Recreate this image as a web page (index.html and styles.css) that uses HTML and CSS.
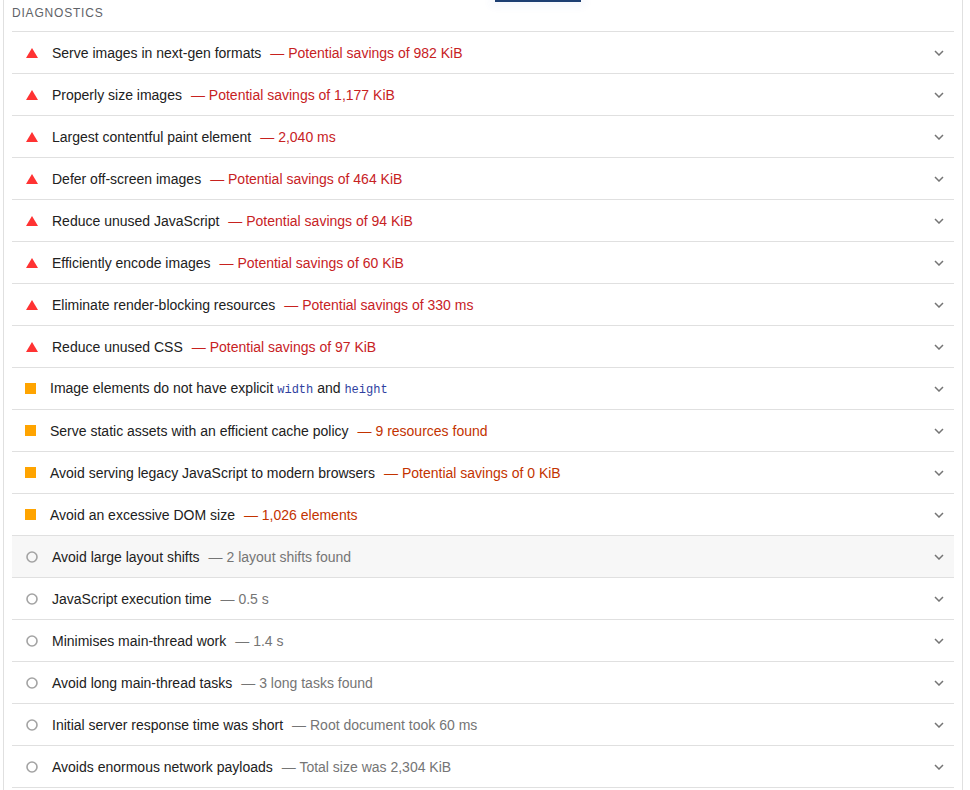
FILE: index.html
```html
<!DOCTYPE html>
<html lang="en">
<head>
    <meta charset="UTF-8">
    <meta name="viewport" content="width=device-width, initial-scale=1.0">
    <title>Diagnostics</title>
    <link rel="stylesheet" href="styles.css">
</head>
<body>
    <div class="audit-group">
        <div class="tab-marker"></div>
        <div class="group-header">Diagnostics</div>
        <div class="audit-list">
            <div class="audit fail">
                <span class="audit-icon"><svg width="12" height="10" viewBox="0 0 12 10"><path d="M6 0L12 10H0Z" fill="#f33"/></svg></span>
                <span class="audit-title">Serve images in next-gen formats</span>
                <span class="audit-value">— Potential savings of 982 KiB</span>
                <span class="chevron"><svg width="10" height="6" viewBox="0 0 10 6"><path d="M1 1l4 4 4-4" fill="none" stroke="#757575" stroke-width="1.5"/></svg></span>
            </div>
            <div class="audit fail">
                <span class="audit-icon"><svg width="12" height="10" viewBox="0 0 12 10"><path d="M6 0L12 10H0Z" fill="#f33"/></svg></span>
                <span class="audit-title">Properly size images</span>
                <span class="audit-value">— Potential savings of 1,177 KiB</span>
                <span class="chevron"><svg width="10" height="6" viewBox="0 0 10 6"><path d="M1 1l4 4 4-4" fill="none" stroke="#757575" stroke-width="1.5"/></svg></span>
            </div>
            <div class="audit fail">
                <span class="audit-icon"><svg width="12" height="10" viewBox="0 0 12 10"><path d="M6 0L12 10H0Z" fill="#f33"/></svg></span>
                <span class="audit-title">Largest contentful paint element</span>
                <span class="audit-value">— 2,040 ms</span>
                <span class="chevron"><svg width="10" height="6" viewBox="0 0 10 6"><path d="M1 1l4 4 4-4" fill="none" stroke="#757575" stroke-width="1.5"/></svg></span>
            </div>
            <div class="audit fail">
                <span class="audit-icon"><svg width="12" height="10" viewBox="0 0 12 10"><path d="M6 0L12 10H0Z" fill="#f33"/></svg></span>
                <span class="audit-title">Defer off-screen images</span>
                <span class="audit-value">— Potential savings of 464 KiB</span>
                <span class="chevron"><svg width="10" height="6" viewBox="0 0 10 6"><path d="M1 1l4 4 4-4" fill="none" stroke="#757575" stroke-width="1.5"/></svg></span>
            </div>
            <div class="audit fail">
                <span class="audit-icon"><svg width="12" height="10" viewBox="0 0 12 10"><path d="M6 0L12 10H0Z" fill="#f33"/></svg></span>
                <span class="audit-title">Reduce unused JavaScript</span>
                <span class="audit-value">— Potential savings of 94 KiB</span>
                <span class="chevron"><svg width="10" height="6" viewBox="0 0 10 6"><path d="M1 1l4 4 4-4" fill="none" stroke="#757575" stroke-width="1.5"/></svg></span>
            </div>
            <div class="audit fail">
                <span class="audit-icon"><svg width="12" height="10" viewBox="0 0 12 10"><path d="M6 0L12 10H0Z" fill="#f33"/></svg></span>
                <span class="audit-title">Efficiently encode images</span>
                <span class="audit-value">— Potential savings of 60 KiB</span>
                <span class="chevron"><svg width="10" height="6" viewBox="0 0 10 6"><path d="M1 1l4 4 4-4" fill="none" stroke="#757575" stroke-width="1.5"/></svg></span>
            </div>
            <div class="audit fail">
                <span class="audit-icon"><svg width="12" height="10" viewBox="0 0 12 10"><path d="M6 0L12 10H0Z" fill="#f33"/></svg></span>
                <span class="audit-title">Eliminate render-blocking resources</span>
                <span class="audit-value">— Potential savings of 330 ms</span>
                <span class="chevron"><svg width="10" height="6" viewBox="0 0 10 6"><path d="M1 1l4 4 4-4" fill="none" stroke="#757575" stroke-width="1.5"/></svg></span>
            </div>
            <div class="audit fail">
                <span class="audit-icon"><svg width="12" height="10" viewBox="0 0 12 10"><path d="M6 0L12 10H0Z" fill="#f33"/></svg></span>
                <span class="audit-title">Reduce unused CSS</span>
                <span class="audit-value">— Potential savings of 97 KiB</span>
                <span class="chevron"><svg width="10" height="6" viewBox="0 0 10 6"><path d="M1 1l4 4 4-4" fill="none" stroke="#757575" stroke-width="1.5"/></svg></span>
            </div>
            <div class="audit average">
                <span class="audit-icon"><span class="square"></span></span>
                <span class="audit-title">Image elements do not have explicit <code>width</code> and <code>height</code></span>
                <span class="chevron"><svg width="10" height="6" viewBox="0 0 10 6"><path d="M1 1l4 4 4-4" fill="none" stroke="#757575" stroke-width="1.5"/></svg></span>
            </div>
            <div class="audit average">
                <span class="audit-icon"><span class="square"></span></span>
                <span class="audit-title">Serve static assets with an efficient cache policy</span>
                <span class="audit-value">— 9 resources found</span>
                <span class="chevron"><svg width="10" height="6" viewBox="0 0 10 6"><path d="M1 1l4 4 4-4" fill="none" stroke="#757575" stroke-width="1.5"/></svg></span>
            </div>
            <div class="audit average">
                <span class="audit-icon"><span class="square"></span></span>
                <span class="audit-title">Avoid serving legacy JavaScript to modern browsers</span>
                <span class="audit-value">— Potential savings of 0 KiB</span>
                <span class="chevron"><svg width="10" height="6" viewBox="0 0 10 6"><path d="M1 1l4 4 4-4" fill="none" stroke="#757575" stroke-width="1.5"/></svg></span>
            </div>
            <div class="audit average">
                <span class="audit-icon"><span class="square"></span></span>
                <span class="audit-title">Avoid an excessive DOM size</span>
                <span class="audit-value">— 1,026 elements</span>
                <span class="chevron"><svg width="10" height="6" viewBox="0 0 10 6"><path d="M1 1l4 4 4-4" fill="none" stroke="#757575" stroke-width="1.5"/></svg></span>
            </div>
            <div class="audit info hover">
                <span class="audit-icon"><svg width="12" height="12" viewBox="0 0 12 12"><circle cx="6" cy="6" r="5" fill="none" stroke="#a3a3a3" stroke-width="1.6"/></svg></span>
                <span class="audit-title">Avoid large layout shifts</span>
                <span class="audit-value">— 2 layout shifts found</span>
                <span class="chevron"><svg width="10" height="6" viewBox="0 0 10 6"><path d="M1 1l4 4 4-4" fill="none" stroke="#757575" stroke-width="1.5"/></svg></span>
            </div>
            <div class="audit info">
                <span class="audit-icon"><svg width="12" height="12" viewBox="0 0 12 12"><circle cx="6" cy="6" r="5" fill="none" stroke="#a3a3a3" stroke-width="1.6"/></svg></span>
                <span class="audit-title">JavaScript execution time</span>
                <span class="audit-value">— 0.5 s</span>
                <span class="chevron"><svg width="10" height="6" viewBox="0 0 10 6"><path d="M1 1l4 4 4-4" fill="none" stroke="#757575" stroke-width="1.5"/></svg></span>
            </div>
            <div class="audit info">
                <span class="audit-icon"><svg width="12" height="12" viewBox="0 0 12 12"><circle cx="6" cy="6" r="5" fill="none" stroke="#a3a3a3" stroke-width="1.6"/></svg></span>
                <span class="audit-title">Minimises main-thread work</span>
                <span class="audit-value">— 1.4 s</span>
                <span class="chevron"><svg width="10" height="6" viewBox="0 0 10 6"><path d="M1 1l4 4 4-4" fill="none" stroke="#757575" stroke-width="1.5"/></svg></span>
            </div>
            <div class="audit info">
                <span class="audit-icon"><svg width="12" height="12" viewBox="0 0 12 12"><circle cx="6" cy="6" r="5" fill="none" stroke="#a3a3a3" stroke-width="1.6"/></svg></span>
                <span class="audit-title">Avoid long main-thread tasks</span>
                <span class="audit-value">— 3 long tasks found</span>
                <span class="chevron"><svg width="10" height="6" viewBox="0 0 10 6"><path d="M1 1l4 4 4-4" fill="none" stroke="#757575" stroke-width="1.5"/></svg></span>
            </div>
            <div class="audit info">
                <span class="audit-icon"><svg width="12" height="12" viewBox="0 0 12 12"><circle cx="6" cy="6" r="5" fill="none" stroke="#a3a3a3" stroke-width="1.6"/></svg></span>
                <span class="audit-title">Initial server response time was short</span>
                <span class="audit-value">— Root document took 60 ms</span>
                <span class="chevron"><svg width="10" height="6" viewBox="0 0 10 6"><path d="M1 1l4 4 4-4" fill="none" stroke="#757575" stroke-width="1.5"/></svg></span>
            </div>
            <div class="audit info">
                <span class="audit-icon"><svg width="12" height="12" viewBox="0 0 12 12"><circle cx="6" cy="6" r="5" fill="none" stroke="#a3a3a3" stroke-width="1.6"/></svg></span>
                <span class="audit-title">Avoids enormous network payloads</span>
                <span class="audit-value">— Total size was 2,304 KiB</span>
                <span class="chevron"><svg width="10" height="6" viewBox="0 0 10 6"><path d="M1 1l4 4 4-4" fill="none" stroke="#757575" stroke-width="1.5"/></svg></span>
            </div>
        </div>
    </div>
</body>
</html>
```

FILE: styles.css
```css
:root {
    --text: #212121;
    --border: #e0e0e0;
    --fail-text: #c7221f;
    --average-text: #c33300;
    --info-text: #757575;
    --average: #ffa400;
    --hover: #f7f7f7;
}
body {
    margin: 0;
    background: #fff;
    font-family: "Liberation Sans", Arial, sans-serif;
    color: var(--text);
}
.audit-group {
    box-sizing: border-box;
    width: 960px;
    min-height: 790px;
    margin-left: 3px;
    padding: 0 8px;
    border-left: 1px solid var(--border);
    border-right: 1px solid var(--border);
}
.tab-marker {
    width: 86px;
    height: 2px;
    margin-left: 483px;
    background: #1d3f72;
    box-shadow: 0 0 10px 4px rgba(60, 110, 200, 0.06);
}
.group-header {
    padding: 2px 0 9px;
    font-size: 12px;
    line-height: 18px;
    letter-spacing: 0.8px;
    text-transform: uppercase;
    color: #5f6368;
}
.audit-list {
    border-bottom: 1px solid var(--border);
}
.audit {
    display: flex;
    align-items: center;
    height: 41px;
    padding: 0 10px 0 13px;
    border-top: 1px solid var(--border);
    font-size: 14px;
}
.audit.hover {
    background: var(--hover);
}
.audit-icon {
    display: flex;
    align-items: center;
    justify-content: center;
    width: 14px;
    margin-right: 13px;
}
.audit.average .audit-icon {
    width: 12px;
    justify-content: flex-start;
}
.square {
    width: 11px;
    height: 11px;
    background: var(--average);
}
.audit-title {
    white-space: nowrap;
}
.audit-title code {
    font-family: "Liberation Mono", "DejaVu Sans Mono", monospace;
    font-size: 12px;
    color: #303f9f;
}
.audit-value {
    margin-left: 9px;
    white-space: nowrap;
}
.audit.fail .audit-value {
    color: var(--fail-text);
}
.audit.average .audit-value {
    color: var(--average-text);
}
.audit.info .audit-value {
    color: var(--info-text);
}
.chevron {
    display: flex;
    margin-left: auto;
}
```
